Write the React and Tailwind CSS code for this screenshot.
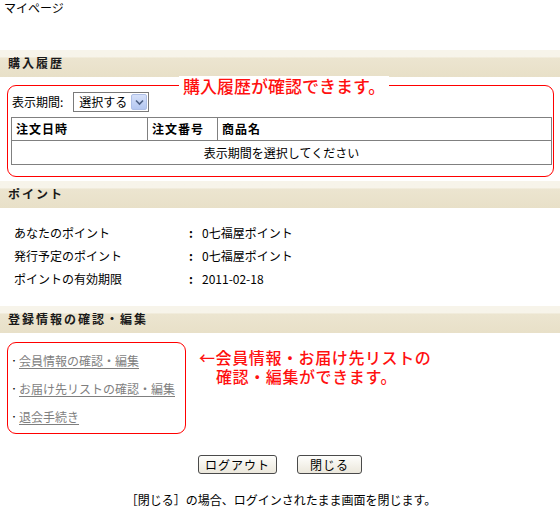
import React from "react";

const font = { fontFamily: '"Noto Sans CJK JP", "Noto Sans", sans-serif' };

const SectionHead = ({ title }) => (
  <div className="h-[27px] bg-linear-to-b from-[#f7f4ea] from-25% via-[#ece5d0] via-30% to-[#e8e0c8] flex items-center pl-2 pb-[2px]">
    <h2 className="text-[12px] font-bold tracking-[2px] text-[#1a1a1a] leading-none">{title}</h2>
  </div>
);

const pointRows = [
  ["あなたのポイント", "0七福屋ポイント"],
  ["発行予定のポイント", "0七福屋ポイント"],
  ["ポイントの有効期限", "2011-02-18"],
];

const links = ["会員情報の確認・編集", "お届け先リストの確認・編集", "退会手続き"];

export default function App() {
  return (
    <div className="w-[560px] h-[530px] bg-white text-black text-[12px]" style={font}>
      <p className="pl-[4px] pt-[1px] leading-[14px]">マイページ</p>

      {/* 購入履歴 */}
      <div className="mt-[35px]">
        <SectionHead title="購入履歴" />
        <div className="relative mt-[8px] ml-[7px] w-[547px] h-[92px] border border-[#ff0000] rounded-[9px] pl-[3px] pr-[1px] pt-[6px]">
          <span className="absolute top-[-10px] left-[171px] bg-white px-[4px] leading-[20px] text-[17px] font-medium text-[#ff1010]">
            購入履歴が確認できます。
          </span>
          <div className="flex items-center gap-[10px] pl-[1px]">
            <span>表示期間:</span>
            <div className="flex items-center w-[76px] h-[20px] border border-[#7a7a7a] bg-white pl-[5px] pr-[1px]">
              <span className="flex-1 leading-none">選択する</span>
              <span className="w-[16px] h-[16px] rounded-[2px] bg-linear-to-b from-[#d6e1fa] to-[#b4c7f0] border border-[#aebfe6] flex items-center justify-center">
                <svg width="9" height="7" viewBox="0 0 9 7">
                  <path d="M1 1.5 L4.5 5 L8 1.5" fill="none" stroke="#4d6185" strokeWidth="1.6" />
                </svg>
              </span>
            </div>
          </div>
          <table className="mt-[5px] w-[541px] border-collapse">
            <thead>
              <tr className="h-[23px]">
                <th className="w-[136px] border border-[#808080] text-left font-bold pl-[4px] tracking-[1px]">注文日時</th>
                <th className="w-[70px] border border-[#808080] text-left font-bold pl-[4px] tracking-[1px]">注文番号</th>
                <th className="border border-[#808080] text-left font-bold pl-[4px] tracking-[1px]">商品名</th>
              </tr>
            </thead>
            <tbody>
              <tr className="h-[24px]">
                <td colSpan={3} className="border border-[#808080] text-center">表示期間を選択してください</td>
              </tr>
            </tbody>
          </table>
        </div>
      </div>

      {/* ポイント */}
      <div className="mt-[4px]">
        <SectionHead title="ポイント" />
        <div className="pt-[13px] pb-[16px] pl-[14px]">
          {pointRows.map(([label, value]) => (
            <div key={label} className="grid grid-cols-[175px_13px_1fr] h-[23px] items-center leading-none">
              <span>{label}</span>
              <span className="font-bold">:</span>
              <span>{value}</span>
            </div>
          ))}
        </div>
      </div>

      {/* 登録情報 */}
      <div>
        <SectionHead title="登録情報の確認・編集" />
        <div className="flex mt-[9px]">
          <div className="ml-[7px] w-[179px] h-[92px] border border-[#ff0000] rounded-[9px] pl-[2px] pt-[4px]">
            {links.map((l) => (
              <div key={l} className="h-[28px] flex items-center leading-none">
                <span className="w-[9px] text-[8px]">・</span>
                <a href="#" className="text-[#7f7f7f] underline underline-offset-2">{l}</a>
              </div>
            ))}
          </div>
          <div className="ml-[13px] pt-[4px] text-[16px] leading-[22px] tracking-[0.6px] font-medium text-[#ff1010]">
            <p className="-mb-[3px]">←会員情報・お届け先リストの</p>
            <p className="pl-[17px]">確認・編集ができます。</p>
          </div>
        </div>
      </div>

      <div className="flex justify-center gap-[20px] mt-[21px]">
        <button className="w-[79px] h-[19px] border border-[#4a4a4a] rounded-[3px] bg-linear-to-b from-[#fefefc] to-[#ebe7db] text-[12px] leading-none tracking-[1px]">
          ログアウト
        </button>
        <button className="w-[65px] h-[19px] border border-[#4a4a4a] rounded-[3px] bg-linear-to-b from-[#fefefc] to-[#ebe7db] text-[12px] leading-none tracking-[1px]">
          閉じる
        </button>
      </div>

      <p className="text-center mt-[17px] pl-[2px]">［閉じる］の場合、ログインされたまま画面を閉じます。</p>
    </div>
  );
}
